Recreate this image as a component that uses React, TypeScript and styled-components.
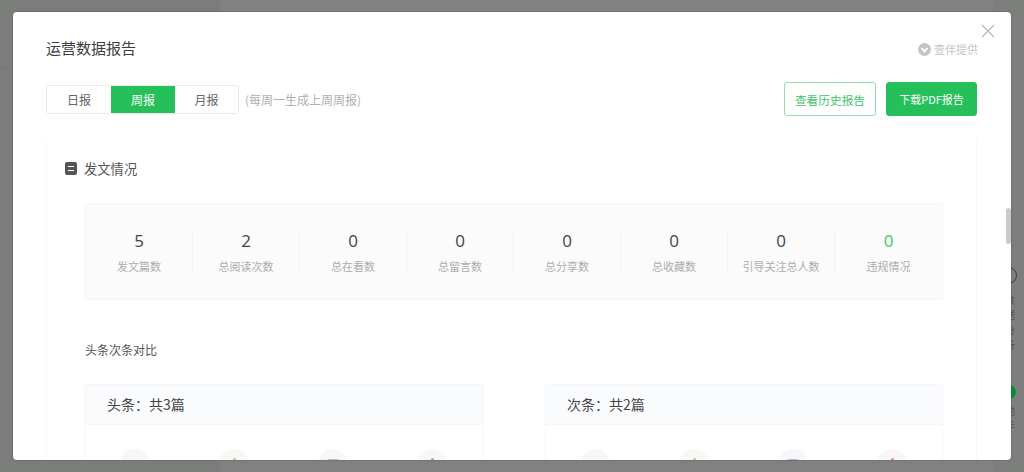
import React from "react";
import styled, { createGlobalStyle } from "styled-components";

const Global = createGlobalStyle`
  html, body { margin: 0; padding: 0; height: 100%; overflow: hidden; background: #808180; }
  #root { height: 100%; }
  * { box-sizing: border-box; }
`;

const FONT = `"Noto Sans CJK SC", "Open Sans", "Liberation Sans", sans-serif`;

const Page = styled.div`
  position: relative;
  width: 1024px;
  height: 472px;
  overflow: hidden;
  display: flex;
  background: #808180;
  font-family: ${FONT};
`;
const BackSide = styled.aside`
  width: 220px;
  flex: none;
  background: #7b7d7b;
`;
const BackSideHead = styled.div`
  height: 69px;
  border-bottom: 1px solid #767876;
`;
const BackMain = styled.main`
  flex: 1;
  display: flex;
  justify-content: flex-end;
`;
const Rail = styled.div`
  width: 30px;
  padding: 267px 7px 0 0;
  display: flex;
  flex-direction: column;
  align-items: flex-end;
  background: #7d7f7d;
  color: #555;
  font-size: 10px;
  line-height: 15px;
`;
const RailRing = styled.div`
  width: 17px;
  height: 17px;
  border: 1px solid #3a3a3a;
  border-radius: 50%;
  margin-bottom: 8px;
`;
const RailText = styled.div`
  width: 10px;
  margin-right: 2px;
  text-align: center;
`;
const RailDot = styled.div`
  width: 14px;
  height: 14px;
  margin: 33px 1px 4px 0;
  border-radius: 50%;
  background: #0f8a3c;
`;
const Overlay = styled.div`
  position: absolute;
  inset: 0;
  padding: 12px 13px;
`;
const Modal = styled.div`
  position: relative;
  height: 448px;
  background: #fff;
  border-radius: 4px;
  overflow: hidden;
  padding: 21px 34px 0 33px;
  box-shadow: 0 0 2px rgba(0, 0, 0, 0.35);
`;
const Close = styled.button`
  position: absolute;
  top: 12px;
  right: 16px;
  width: 14px;
  height: 14px;
  padding: 0;
  border: 0;
  background: none;
  display: block;
`;
const Thumb = styled.div`
  position: absolute;
  top: 196px;
  right: 0;
  width: 5px;
  height: 36px;
  border-radius: 3px;
  background: #c9c9c9;
`;
const TitleRow = styled.div`
  display: flex;
  justify-content: space-between;
  align-items: center;
  height: 30px;
`;
const Title = styled.h1`
  margin: 0;
  font-size: 15px;
  font-weight: 400;
  color: #3d3d3d;
  line-height: 30px;
`;
const Provider = styled.div`
  display: flex;
  align-items: center;
  gap: 3px;
  margin: 2px -1px 0 0;
  font-size: 11px;
  color: #c4c4c4;
`;
const ToolRow = styled.div`
  display: flex;
  justify-content: space-between;
  align-items: center;
  height: 34px;
  margin-top: 19px;
`;
const Left = styled.div`
  display: flex;
  align-items: center;
`;
const Tabs = styled.div`
  display: grid;
  grid-template-columns: 64px 64px 63px;
  height: 29px;
  border: 1px solid #e9e9e9;
  border-radius: 3px;
  overflow: hidden;
`;
const Tab = styled.div<{ $active?: boolean }>`
  display: flex;
  align-items: center;
  justify-content: center;
  font-size: 12px;
  background: ${(p) => (p.$active ? "#25c05a" : "#fff")};
  color: ${(p) => (p.$active ? "#fff" : "#666")};
`;
const Hint = styled.span`
  margin-left: 6px;
  font-size: 12px;
  color: #b0b0b0;
`;
const Actions = styled.div`
  display: flex;
  gap: 10px;
`;
const Btn = styled.button<{ $primary?: boolean }>`
  width: ${(p) => (p.$primary ? "91px" : "92px")};
  height: 34px;
  padding: 0;
  border-radius: 3px;
  font-family: ${FONT};
  font-size: ${(p) => (p.$primary ? "11px" : "11.7px")};
  border: 1px solid ${(p) => (p.$primary ? "#25c05a" : "#8fe0ab")};
  background: ${(p) => (p.$primary ? "#25c05a" : "#fff")};
  color: ${(p) => (p.$primary ? "#fff" : "#3cc56c")};
`;
const Card = styled.section`
  margin-top: 24px;
  height: 330px;
  border-left: 1px solid #f7f7f7;
  border-right: 1px solid #f7f7f7;
  padding: 17px 33px 0 18px;
`;
const CardTitle = styled.div`
  display: flex;
  align-items: center;
  gap: 7px;
  height: 22px;
  font-size: 13.3px;
  color: #555;
`;
const Stats = styled.div`
  display: grid;
  grid-template-columns: repeat(8, 1fr);
  align-items: center;
  height: 97px;
  margin: 24px 0 0 20px;
  background: #fbfbfb;
  border: 1px solid #f5f5f5;
  border-radius: 3px;
`;
const Stat = styled.div<{ $last?: boolean }>`
  height: 46px;
  display: flex;
  flex-direction: column;
  align-items: center;
  justify-content: space-between;
  border-right: ${(p) => (p.$last ? "0" : "1px solid #f2f2f2")};
`;
const Num = styled.div<{ $green?: boolean }>`
  margin-top: 2px;
  font-size: 17px;
  line-height: 20px;
  color: ${(p) => (p.$green ? "#3ccb6c" : "#444")};
  font-family: "Open Sans", sans-serif;
`;
const Label = styled.div`
  margin-bottom: 1px;
  font-size: 11px;
  line-height: 16px;
  color: #acacac;
`;
const SubTitle = styled.div`
  margin: 41px 0 0 20px;
  font-size: 12px;
  line-height: 18px;
  color: #555;
`;
const Compare = styled.div`
  display: grid;
  grid-template-columns: 398px 398px;
  justify-content: space-between;
  margin: 25px 0 0 20px;
`;
const Panel = styled.div`
  border: 1px solid #f5f6f9;
  border-radius: 2px;
  height: 120px;
`;
const PanelHead = styled.div`
  height: 40px;
  padding: 0 0 2px 21px;
  display: flex;
  align-items: center;
  background: #fafbfd;
  border-bottom: 1px solid #f5f6f9;
  font-size: 14px;
  color: #444;
`;
const Metrics = styled.div`
  display: flex;
  gap: 69px;
  padding: 24px 0 0 34px;
`;
const Circle = styled.div`
  width: 30px;
  height: 30px;
  border-radius: 50%;
  background: #f7f7f7;
  display: flex;
  justify-content: center;
`;
const Tip = styled.div<{ $color: string; $wide?: boolean }>`
  width: ${(p) => (p.$wide ? "12px" : "3px")};
  height: 5px;
  margin-top: ${(p) => (p.$wide ? "10px" : "9px")};
  border-radius: 2px 2px 0 0;
  background: ${(p) => p.$color};
`;

const tips = [
  { color: "transparent" },
  { color: "#f3b04c" },
  { color: "#9cc2ec", wide: true },
  { color: "#ee8f4d" },
];
const stats: [string, string][] = [
  ["5", "发文篇数"],
  ["2", "总阅读次数"],
  ["0", "总在看数"],
  ["0", "总留言数"],
  ["0", "总分享数"],
  ["0", "总收藏数"],
  ["0", "引导关注总人数"],
  ["0", "违规情况"],
];

const CompareCard = ({ title }: { title: string }) => (
  <Panel>
    <PanelHead>{title}</PanelHead>
    <Metrics>
      {tips.map((t) => (
        <Circle key={t.color}>
          <Tip $color={t.color} $wide={t.wide} />
        </Circle>
      ))}
    </Metrics>
  </Panel>
);

export default function App() {
  return (
    <Page>
      <Global />
      <BackSide>
        <BackSideHead />
      </BackSide>
      <BackMain>
        <Rail>
          <RailRing />
          <RailText>数据</RailText>
          <RailText>分析</RailText>
          <RailDot />
          <RailText>助手</RailText>
        </Rail>
      </BackMain>
      <Overlay>
        <Modal>
          <Close aria-label="关闭">
            <svg width="14" height="14" viewBox="0 0 14 14" fill="none" stroke="#b4b4b4" strokeWidth="1.1">
              <path d="M1 1l12 12M13 1L1 13" />
            </svg>
          </Close>
          <Thumb />
          <TitleRow>
            <Title>运营数据报告</Title>
            <Provider>
              <svg width="13" height="13" viewBox="0 0 13 13">
                <circle cx="6.5" cy="6.5" r="6.5" fill="#c4c4c4" />
                <path d="M3.6 5l2.9 3.6L9.4 5" fill="none" stroke="#fff" strokeWidth="1.9" />
              </svg>
              壹伴提供
            </Provider>
          </TitleRow>
          <ToolRow>
            <Left>
              <Tabs>
                <Tab>日报</Tab>
                <Tab $active>周报</Tab>
                <Tab>月报</Tab>
              </Tabs>
              <Hint>(每周一生成上周周报)</Hint>
            </Left>
            <Actions>
              <Btn>查看历史报告</Btn>
              <Btn $primary>下载PDF报告</Btn>
            </Actions>
          </ToolRow>
          <Card>
            <CardTitle>
              <svg width="12" height="13" viewBox="0 0 12 13">
                <rect width="12" height="13" rx="2" fill="#555" />
                <path d="M3 4.5h6M3 8.5h6" stroke="#fff" strokeWidth="1.2" />
              </svg>
              发文情况
            </CardTitle>
            <Stats>
              {stats.map(([n, l], i) => (
                <Stat key={l} $last={i === 7}>
                  <Num $green={i === 7}>{n}</Num>
                  <Label>{l}</Label>
                </Stat>
              ))}
            </Stats>
            <SubTitle>头条次条对比</SubTitle>
            <Compare>
              <CompareCard title={"头条\uFF1A共3篇"} />
              <CompareCard title={"次条\uFF1A共2篇"} />
            </Compare>
          </Card>
        </Modal>
      </Overlay>
    </Page>
  );
}
